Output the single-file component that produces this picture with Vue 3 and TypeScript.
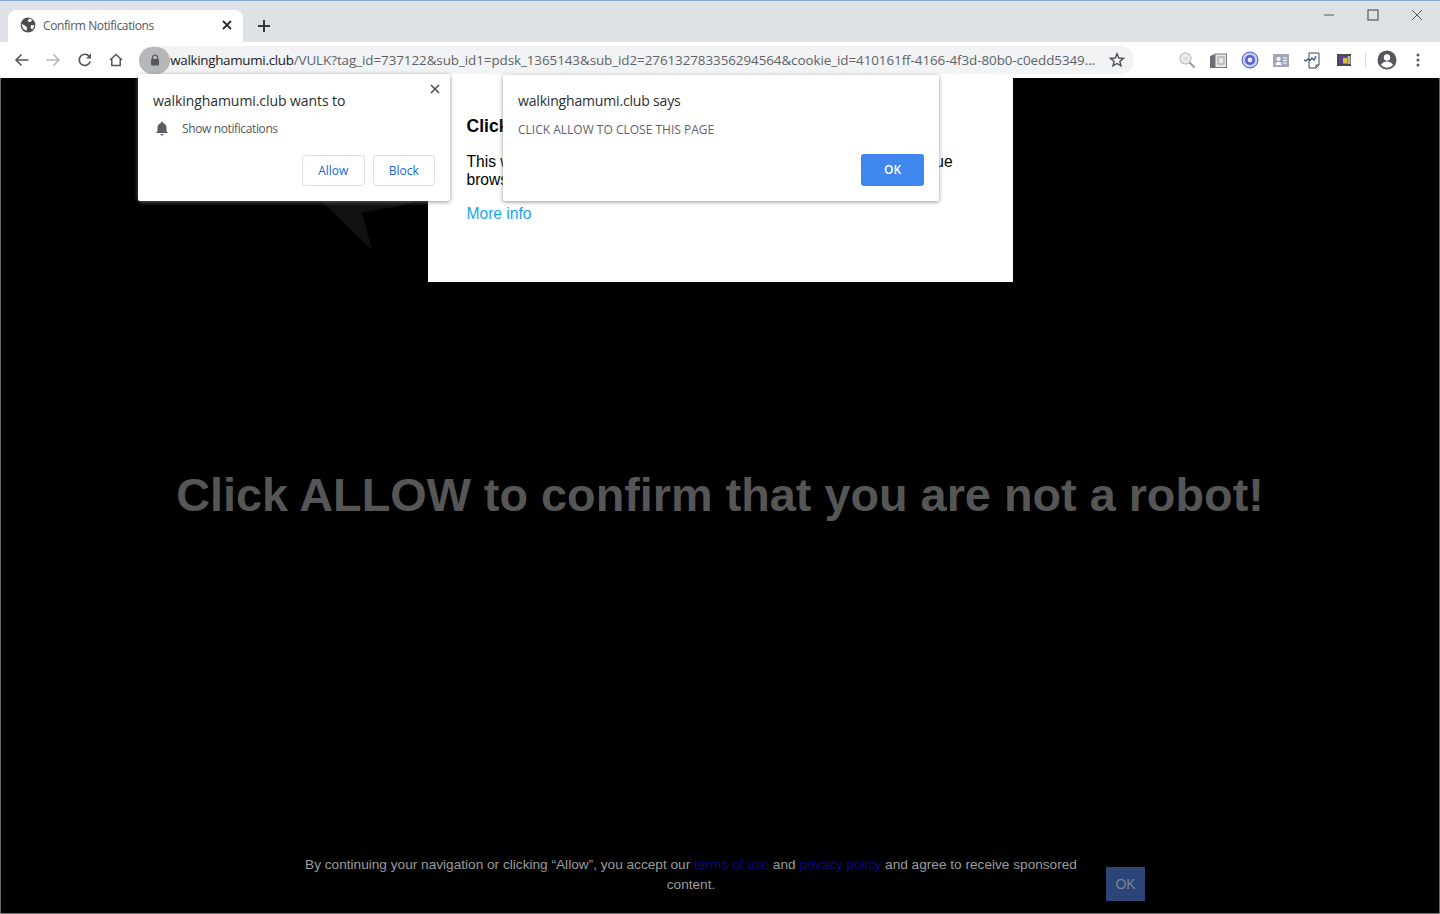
<script setup lang="ts">
const url = "/VULK?tag_id=737122&sub_id1=pdsk_1365143&sub_id2=276132783356294564&cookie_id=410161ff-4166-4f3d-80b0-c0edd5349..."
</script>

<template>
  <div class="window">
    <header class="tabstrip">
      <div class="tab">
        <svg class="globe" width="16" height="16" viewBox="0 0 16 16"><circle cx="8" cy="8" r="7.4" fill="#4a4d51"/><path d="M3 11.500 1.500 7 5 8.500 7 10.500 6.500 14ZM9 1.500 12.500 3 10.500 5 7.500 4.500ZM11 8 14.500 8.500 12.500 12.500 10.500 11Z" fill="#fff"/></svg>
        <span class="tabtitle">Confirm Notifications</span>
        <svg class="tabx" width="10" height="10" viewBox="0 0 10 10"><path d="M1 1 9 9M9 1 1 9" stroke="#2b2d30" stroke-width="1.8"/></svg>
      </div>
      <svg class="plus" width="14" height="14" viewBox="0 0 14 14"><path d="M7 1V13M1 7H13" stroke="#33363a" stroke-width="2"/></svg>
      <div class="winctl">
        <span class="wc"><svg width="12" height="12" viewBox="0 0 12 12"><path d="M1 6H11" stroke="#55585c" stroke-width="1"/></svg></span>
        <span class="wc"><svg width="12" height="12" viewBox="0 0 12 12"><rect x="1" y="1" width="10" height="10" fill="none" stroke="#55585c" stroke-width="1.2"/></svg></span>
        <span class="wc"><svg width="12" height="12" viewBox="0 0 12 12"><path d="M1 1 11 11M11 1 1 11" stroke="#55585c" stroke-width="1"/></svg></span>
      </div>
    </header>

    <nav class="toolbar">
      <svg class="nav" width="16" height="16" viewBox="0 0 16 16"><path d="M14.500 8H2.500M7.500 2.500 2 8 7.500 13.500" fill="none" stroke="#54575b" stroke-width="1.600"/></svg>
      <svg class="nav" width="16" height="16" viewBox="0 0 16 16"><path d="M1.500 8H13.500M8.500 2.500 14 8 8.500 13.500" fill="none" stroke="#b4b6b9" stroke-width="1.600"/></svg>
      <svg class="nav" width="16" height="16" viewBox="0 0 16 16"><path d="M13.200 9.500A5.600 5.600 0 1 1 12 4.100" fill="none" stroke="#54575b" stroke-width="1.700"/><path d="M14 1.500V6.500H9Z" fill="#54575b"/></svg>
      <svg class="nav" width="16" height="16" viewBox="0 0 16 16"><path d="M2 8 8 2.500 14 8M3.800 7V13.500H12.200V7" fill="none" stroke="#54575b" stroke-width="1.500"/></svg>
      <div class="omnibox">
        <span class="lockpill"><svg width="10" height="12" viewBox="0 0 10 12"><path d="M2.500 5V3.500a2.500 2.500 0 0 1 5 0V5" fill="none" stroke="#54575b" stroke-width="1.200"/><rect x="1" y="5" width="8" height="6.500" rx="1" fill="#54575b"/></svg></span>
        <span class="urltext"><span class="host">walkinghamumi.club</span><span>{{ url }}</span></span>
        <svg class="star" width="16" height="16" viewBox="0 0 16 16"><path d="M8 1.800 9.800 6 14.400 6.400 10.900 9.400 12 13.900 8 11.500 4 13.900 5.100 9.400 1.600 6.400 6.200 6Z" fill="none" stroke="#4a4d51" stroke-width="1.400"/></svg>
      </div>
      <div class="exts">
        <svg width="18" height="18" viewBox="0 0 18 18"><circle cx="7.500" cy="7.500" r="5.500" fill="#eceded" stroke="#c4c6c8" stroke-width="1.500"/><path d="M5 6.500H10M5 8.500H10" stroke="#cfd1d3"/><path d="M11.500 11.500 16.500 16.500" stroke="#9a9c9f" stroke-width="2"/></svg>
        <svg width="17" height="15" viewBox="0 0 17 15"><path d="M0 3 5 1V15H0Z" fill="#6b6e72"/><rect x="5" y="1" width="11.500" height="13.500" fill="#e6e6e7" stroke="#77797c"/><rect x="8" y="4" width="6" height="7" fill="none" stroke="#9a9c9f"/></svg>
        <svg width="18" height="18" viewBox="0 0 18 18"><circle cx="9" cy="9" r="8" fill="#c5caf0" stroke="#4a5ac8" stroke-width="1"/><circle cx="9" cy="9" r="5" fill="#5563c8"/><circle cx="9" cy="9" r="2.400" fill="#e8eaf8"/></svg>
        <svg width="16" height="13" viewBox="0 0 16 13"><rect width="16" height="13" fill="#a2a7bd"/><circle cx="5.500" cy="5" r="2" fill="#fff"/><path d="M2.500 11a3 3 0 0 1 6 0Z" fill="#fff"/><path d="M10 4H14M10 6.500H14M10 9H14" stroke="#fff"/></svg>
        <svg width="18" height="18" viewBox="0 0 18 18"><path d="M6 2H16V14L13 17H6Z" fill="#fff" stroke="#44474b"/><path d="M13 17V14H16" fill="none" stroke="#44474b"/><path d="M1 9 3 10 5 8 7 9.500 9 7 11 9 13 5" fill="none" stroke="#4a5a8a" stroke-width="1.400"/></svg>
        <svg width="14" height="12" viewBox="0 0 14 12"><rect width="14" height="12" fill="#4a4d44"/><rect x="2" y="1.500" width="8" height="8" fill="#5d3d9a"/><rect x="6" y="4" width="4" height="5.500" fill="#d8c43a"/><rect x="10.500" y="2" width="3" height="8" fill="#b5b7a8"/></svg>
      </div>
      <span class="sep"></span>
      <svg class="avatar" width="20" height="20" viewBox="0 0 20 20"><circle cx="10" cy="10" r="9.500" fill="#54575b"/><circle cx="10" cy="7.500" r="3.200" fill="#fff"/><path d="M4 15c1.500-2.600 3.500-3.400 6-3.400s4.500.8 6 3.400a8 8 0 0 1-12 0Z" fill="#fff"/></svg>
      <svg class="menu" width="4" height="14" viewBox="0 0 4 14"><circle cx="2" cy="2" r="1.500" fill="#54575b"/><circle cx="2" cy="7" r="1.500" fill="#54575b"/><circle cx="2" cy="12" r="1.500" fill="#54575b"/></svg>
    </nav>

    <main class="page">
      <svg class="shard" width="95" height="56" viewBox="0 0 95 56"><path d="M0 0 54 52 44 15 95 5V0Z" fill="#111"/></svg>

      <section class="card">
        <h2>Click Allow to continue</h2>
        <p>This window can be closed by pressing "Allow". If you wish to continue browsing this website just click the more info button</p>
        <a class="more">More info</a>
      </section>

      <h1 class="headline">Click ALLOW to confirm that you are not a robot!</h1>

      <footer class="consent">
        <div class="consent-text">
          <div class="cline"><span>By continuing your navigation or clicking “Allow”, you accept our </span><a>terms of use</a><span> and </span><a>privacy policy</a><span> and agree to receive sponsored</span></div>
          <div class="cline">content.</div>
        </div>
        <button class="consent-ok">OK</button>
      </footer>

      <div class="prompt">
        <svg class="promptx" width="10" height="10" viewBox="0 0 10 10"><path d="M1 1 9 9M9 1 1 9" stroke="#4a4d51" stroke-width="1.600"/></svg>
        <div class="ptitle">walkinghamumi.club wants to</div>
        <div class="prow">
          <svg width="14" height="15" viewBox="0 0 14 15"><path d="M7 .5a1 1 0 0 1 1 1V2c2.300.5 3.500 2.500 3.500 4.500V10l1.500 2H1l1.500-2V6.500C2.500 4.500 3.700 2.500 6 2v-.5a1 1 0 0 1 1-1Z" fill="#5b5e62"/><path d="M5.500 13h3a1.500 1.500 0 0 1-3 0Z" fill="#5b5e62"/></svg>
          <span>Show notifications</span>
        </div>
        <div class="pbtns">
          <button>Allow</button>
          <button>Block</button>
        </div>
      </div>

      <div class="alert">
        <div class="atitle">walkinghamumi.club says</div>
        <div class="amsg">CLICK ALLOW TO CLOSE THIS PAGE</div>
        <div class="abtns"><button>OK</button></div>
      </div>
    </main>
  </div>
</template>

<style>
html, body { margin: 0; background: #000; }
</style>

<style scoped>
.window {
  width: 1440px;
  height: 914px;
  display: flex;
  flex-direction: column;
  overflow: hidden;
  font-family: "Open Sans", "Noto Sans", sans-serif;
}
.tabstrip {
  height: 41px;
  flex: none;
  background: #dee1e6;
  border-top: 1px solid #7fa7d0;
  display: flex;
  align-items: flex-end;
  padding-left: 8px;
}
.tab {
  width: 235px;
  height: 32px;
  background: #fff;
  border-radius: 8px 8px 0 0;
  display: flex;
  align-items: center;
  padding: 0 11px 2px 12px;
  box-sizing: border-box;
}
.globe { margin-right: 7px; flex: none; }
.tabtitle { flex: 1; font-size: 12px; color: #55585c; letter-spacing: -0.39px; }
.tabx { flex: none; }
.plus { margin: 0 0 9px 14px; }
.winctl {
  margin-left: auto;
  margin-right: 1px;
  align-self: flex-start;
  display: flex;
}
.wc {
  width: 44px;
  height: 28px;
  display: flex;
  align-items: center;
  justify-content: center;
}
.toolbar {
  height: 36px;
  flex: none;
  background: #fff;
  display: flex;
  align-items: center;
  padding-left: 14px;
  box-sizing: border-box;
}
.nav { margin-right: 15.3px; flex: none; }
.omnibox {
  width: 995px;
  height: 28px;
  background: #f1f3f4;
  border-radius: 14px;
  display: flex;
  align-items: center;
  flex: none;
}
.lockpill {
  width: 31px;
  height: 27px;
  background: #b6b7b8;
  border-radius: 14px;
  display: flex;
  align-items: center;
  justify-content: center;
  flex: none;
}
.urltext {
  font-size: 13.4px;
  color: #5f6368;
  white-space: nowrap;
  flex: 1;
  min-width: 0;
  overflow: hidden;
  letter-spacing: -0.06px;
}
.host { color: #202124; letter-spacing: -0.3px; }
.star { flex: none; margin: 0 9px 0 10px; }
.exts {
  display: grid;
  grid-template-columns: repeat(6, 31.4px);
  justify-items: center;
  align-items: center;
  margin-left: 37px;
  flex: none;
}
.sep { width: 1px; height: 16px; background: #dadce0; margin-left: 5px; flex: none; }
.avatar { margin-left: 11px; flex: none; }
.menu { margin-left: 19px; flex: none; }
.page {
  flex: 1;
  background: #000;
  position: relative;
  display: flex;
  flex-direction: column;
  align-items: center;
  border-bottom: 1px solid #777;
  box-shadow: inset 1px 0 #666, inset -1px 0 #666;
}
.shard { position: absolute; left: 318px; top: 120px; }
.card {
  width: 585px;
  height: 204px;
  flex: none;
  background: #fff;
  box-sizing: border-box;
  padding: 37px 39px 0;
  font-family: "Liberation Sans", Arial, sans-serif;
  color: #000;
}
.card h2 { margin: 0 0 15px; font-size: 17.55px; line-height: 23px; font-weight: 700; }
.card p { margin: 0 0 15px; font-size: 15.6px; line-height: 18px; }
.more { font-size: 15.6px; line-height: 20px; color: #1aa3ef; display: block; }
.headline {
  margin: 186px 0 0;
  font-family: "Liberation Sans", Arial, sans-serif;
  font-size: 46.8px;
  line-height: 54px;
  font-weight: 700;
  color: #565656;
  text-align: center;
  white-space: nowrap;
}
.consent {
  position: absolute;
  left: 0;
  right: 0;
  bottom: 0;
  height: 60px;
  font-family: "Liberation Sans", Arial, sans-serif;
  color: #9c9c9c;
  font-size: 13.65px;
  display: flex;
  justify-content: center;
}
.consent-text {
  width: 800px;
  margin: 1.5px 0 0 -58px;
  line-height: 20px;
  text-align: center;
}
.cline { white-space: nowrap; }
.consent a { color: #0a0a7c; }
.consent-ok {
  position: absolute;
  left: 1106px;
  top: 14px;
  width: 39px;
  height: 34px;
  border: 0;
  padding: 0;
  background: #2c4476;
  color: #77839d;
  font: 14px "Liberation Sans", Arial, sans-serif;
}
.prompt, .alert {
  position: absolute;
  background: #fff;
  border-radius: 2px;
  box-shadow: 0 1px 4px rgba(120,120,120,.8);
  box-sizing: border-box;
}
.prompt {
  left: 138px;
  top: -4px;
  width: 312px;
  height: 127px;
  padding: 17px 15px 0;
  color: #202124;
}
.promptx { position: absolute; right: 10px; top: 10px; }
.ptitle { font-size: 14px; line-height: 19px; color: #2c2e31; letter-spacing: -0.07px; }
.prow {
  display: flex;
  align-items: center;
  margin-top: 10px;
  font-size: 12px;
  color: #55585c;
  letter-spacing: -0.38px;
}
.prow svg { margin: 0 13px 0 2px; }
.pbtns {
  position: absolute;
  right: 15px;
  bottom: 15px;
  display: flex;
  gap: 8px;
}
.pbtns button {
  width: 62.5px;
  height: 31px;
  padding: 0 0 1px;
  background: #fff;
  border: 1px solid #dfe1e5;
  border-radius: 3px;
  color: #1a67d2;
  font: 12px "Open Sans", sans-serif;
}
.alert {
  left: 503px;
  top: -3px;
  width: 436px;
  height: 126px;
  padding: 16px 15px 0;
}
.atitle { font-size: 14px; line-height: 19px; color: #2c2e31; letter-spacing: -0.17px; }
.amsg { font-size: 12px; line-height: 17px; color: #5f6368; margin-top: 11px; }
.abtns {
  position: absolute;
  right: 15px;
  bottom: 15px;
}
.abtns button {
  width: 63px;
  height: 32px;
  padding: 0 0 1px;
  background: #3f87ee;
  border: 0;
  border-radius: 3px;
  color: #fff;
  font: 600 12px "Open Sans", sans-serif;
}
</style>
